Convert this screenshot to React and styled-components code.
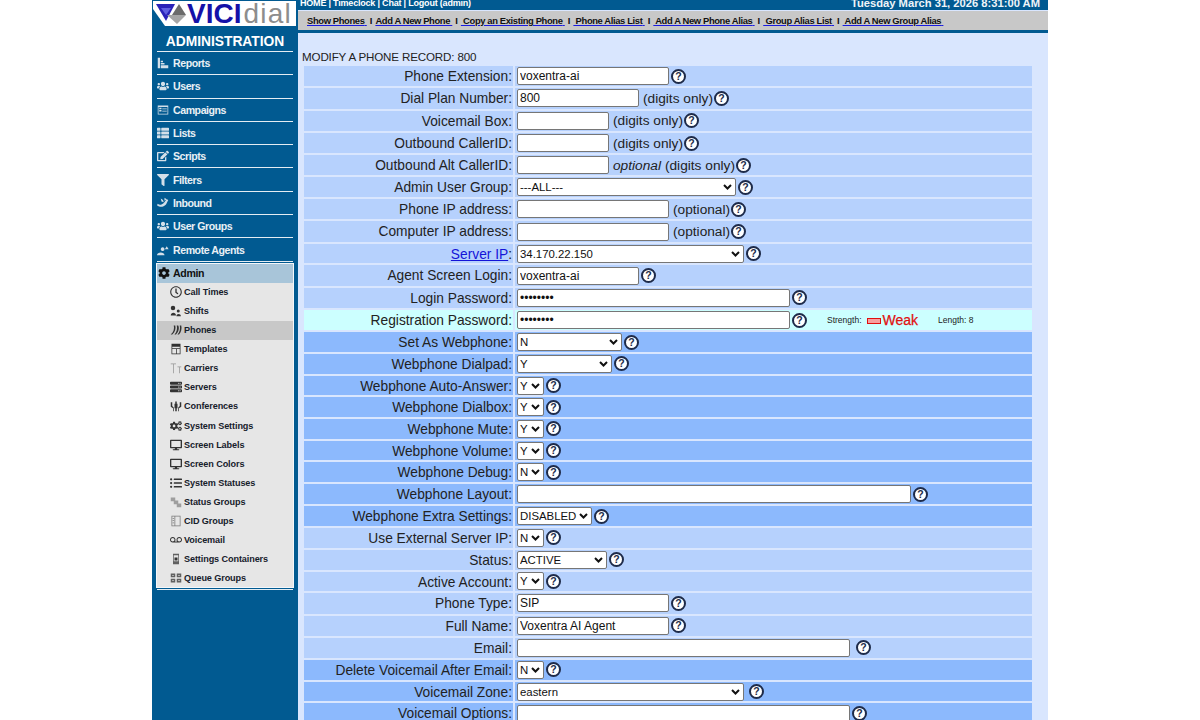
import React from "react";
import styled, { createGlobalStyle } from "styled-components";
import {
  FaUsers, FaFilter, FaCog, FaRegClock, FaServer, FaCogs, FaDesktop, FaEdit, FaListUl, FaThList,
} from "react-icons/fa";
import { MdVoicemail } from "react-icons/md";

const Global = createGlobalStyle`
  html, body { margin: 0; padding: 0; background: #fff; overflow: hidden; }
  body { font-family: "Liberation Sans", Arial, sans-serif; }
`;

const Page = styled.div`
  width: 896px;
  height: 720px;
  margin: 0 auto;
  display: flex;
  overflow: hidden;
`;

const Sidebar = styled.div`
  width: 146px;
  flex: none;
  background: #015a91;
  display: flex;
  flex-direction: column;
`;

const Logo = styled.div`
  height: 25px;
  margin: 1px 2px 0 1px;
  background: #fff;
  clip-path: polygon(0 0, 100% 0, 100% 100%, 12px 100%, 0 8px);
  display: flex;
  align-items: center;
  overflow: hidden;
  font-size: 28px;
  line-height: 25px;
`;

const LogoVici = styled.span`
  font-weight: bold;
  color: #1511a8;
  margin-left: -1px;
`;

const LogoDial = styled.span`
  color: #8d8d8d;
  margin-left: 2px;
  letter-spacing: 1.2px;
`;

const Title = styled.div`
  color: #fff;
  font-size: 13.8px;
  font-weight: bold;
  text-align: center;
  line-height: 17px;
  margin: 7px 5px 0;
  padding-bottom: 1px;
  border-bottom: 1px solid #e4edf3;
`;

const MainItem = styled.div`
  height: 22.3px;
  margin: 0 5px;
  border-bottom: 1px solid #e4edf3;
  display: flex;
  align-items: center;
  gap: 4px;
  color: #e9f0f5;
  font-size: 10.6px;
  font-weight: bold;
  letter-spacing: -0.45px;
  svg { flex: none; width: 12px; height: 12px; color: #d3dfe9; }
`;

const AdminPanel = styled.div`
  margin: 1px 4px 0;
  background: #e6e6e6;
  border: 1px solid #f4f7fa;
`;

const AdminHead = styled.div`
  height: 19px;
  background: #a8c5d9;
  display: flex;
  align-items: center;
  gap: 3px;
  padding-left: 1px;
  color: #111;
  font-size: 10.6px;
  font-weight: bold;
  letter-spacing: -0.35px;
  svg { width: 12px; height: 12px; color: #111; }
`;

const SubItem = styled.div`
  height: 19.05px;
  display: flex;
  align-items: center;
  gap: 2px;
  padding-left: 13px;
  background: ${(p) => (p.$active ? "#c8c8c8" : "transparent")};
  color: #16202b;
  font-size: 9.1px;
  font-weight: bold;
  letter-spacing: -0.1px;
  svg { flex: none; width: 12px; height: 12px; color: #333; }
`;

const PanelEnd = styled.div`
  height: 1px;
  margin: 1px 5px 0;
  background: #e4edf3;
`;

const Main = styled.div`
  flex: 1;
  min-width: 0;
  background: #d9e6fe;
  display: flex;
  flex-direction: column;
`;

const TopBar = styled.div`
  height: 10px;
  flex: none;
  background: #015a91;
  display: flex;
  justify-content: space-between;
  padding: 0 8px 0 2px;
  color: #fff;
  font-size: 9px;
  font-weight: bold;
  line-height: 7px;
  letter-spacing: -0.2px;
  overflow: hidden;
`;

const DateText = styled.span`
  font-size: 11.2px;
  letter-spacing: 0;
  color: #eef4f8;
`;

const NavBar = styled.div`
  height: 19px;
  flex: none;
  margin-top: 1px;
  background: #c8c8c8;
  border-bottom: 3px solid #015a91;
  display: flex;
  align-items: center;
  padding-left: 9px;
  font-size: 9.4px;
  font-weight: bold;
  color: #111;
  white-space: pre;
`;

const NavLink = styled.a`
  color: #111;
  text-decoration: underline;
  text-decoration-color: #1a1ae0;
  letter-spacing: -0.36px;
`;

const NavSep = styled.span`
  margin: 0 3px;
`;

const Heading = styled.div`
  flex: none;
  margin: 16px 0 0 4px;
  height: 17px;
  font-size: 11.6px;
  line-height: 15px;
  color: #222;
  letter-spacing: -0.15px;
`;

const Form = styled.div`
  flex: none;
  width: 728px;
  margin-left: 6px;
  display: flex;
  flex-direction: column;
  gap: 2px;
`;

const Row = styled.div`
  display: grid;
  grid-template-columns: 209px 1fr;
  grid-template-rows: 100%;
  column-gap: 2px;
  height: ${(p) => (p.$tall ? "20.3px" : "19.7px")};
`;

const rowColors = { light: "#b6d1fd", dark: "#8cb9fd", cyan: "#ccffff" };

const Label = styled.div`
  background: ${(p) => rowColors[p.$tone]};
  text-align: right;
  padding-right: 1px;
  font-size: 13.75px;
  line-height: 21.5px;
  color: #222;
  white-space: nowrap;
  a { color: #1414d8; text-decoration: underline; }
`;

const Value = styled.div`
  background: ${(p) => rowColors[p.$tone]};
  display: flex;
  align-items: center;
  padding-left: 2px;
  font-size: 13.7px;
  color: #222;
  white-space: pre;
`;

const TextInput = styled.input`
  box-sizing: border-box;
  height: 18px;
  padding: 1px 2px;
  margin: 0;
  background: #fff;
  border: 1px solid #767676;
  border-radius: 2px;
  font-family: "Liberation Sans", Arial, sans-serif;
  font-size: 12px;
  color: #111;
  outline: none;
`;

const Select = styled.select`
  box-sizing: border-box;
  height: 18px;
  padding: 0 0 0 2px;
  margin: 0;
  appearance: none;
  background-color: #fff;
  background-image: url("data:image/svg+xml,%3Csvg xmlns='http://www.w3.org/2000/svg' width='9' height='6'%3E%3Cpath d='M1 1l3.500 3.500L8 1' fill='none' stroke='%23111' stroke-width='2'/%3E%3C/svg%3E");
  background-repeat: no-repeat;
  background-position: right 3px center;
  border: 1px solid #767676;
  border-radius: 2px;
  font-family: "Liberation Sans", Arial, sans-serif;
  font-size: 11.4px;
  color: #111;
`;

const Help = styled.span`
  box-sizing: border-box;
  width: 15px;
  height: 15px;
  flex: none;
  margin-left: ${(p) => p.$gap}px;
  border: 2px solid #1e2b4a;
  border-radius: 50%;
  background: #fff;
  color: #1e2b4a;
  font-size: 10.5px;
  font-weight: bold;
  line-height: 11px;
  text-align: center;
`;

const Note = styled.span`
  margin-left: 4px;
`;

const Optional = styled.i`
  font-style: italic;
`;

const Strength = styled.div`
  margin-left: 20px;
  display: flex;
  align-items: center;
  font-size: 8.5px;
  color: #222;
`;

const WeakBar = styled.span`
  box-sizing: border-box;
  width: 14px;
  height: 6px;
  margin: 1px 2px 0 5px;
  background: #f7a0a0;
  border: 1px solid #e01010;
`;

const Weak = styled.span`
  font-size: 14px;
  color: #e01010;
  -webkit-text-stroke: 0.25px #e01010;
  margin-right: 20px;
`;

const Svg = ({ children }) => (
  <svg viewBox="0 0 16 16" fill="currentColor">{children}</svg>
);

const ReportsIcon = () => (
  <Svg><path d="M1 1h3v14H1zM5 5h3v2H5zM5 8h5v2H5zM5 11h10v4H5z" /></Svg>
);
const BoxListIcon = () => (
  <Svg>
    <path d="M1 2h14v12H1zm1 2v9h12V4z" fillRule="evenodd" />
    <path d="M3 5h3v2H3zM3 8h3v2H3zM7 6h6v1H7zM7 9h6v1H7z" />
  </Svg>
);
const InboundIcon = () => (
  <Svg><path d="M1 9c2 2 5 2 8-1l4-5 2 1-3 6c-4 4-8 4-12 1zM5 2l3 2 1 3-3-1zM10 1l3 2-3 2z" /></Svg>
);
const RemoteIcon = () => (
  <Svg><path d="M5 7a2.500 2.500 0 1 0 0-.1zM0 15c0-5 10-5 10 0zM13 3l2.500 4h-5z" /></Svg>
);
const ShiftsIcon = () => (
  <Svg><path d="M4 1a3 3 0 1 1 0 6 3 3 0 0 1 0-6zM1 14c0-5 7-5 7 0zM11 6a2 2 0 1 1 0 4 2 2 0 0 1 0-4zM8.500 15c0-4 6-4 6 0z" /></Svg>
);
const PhonesIcon = () => (
  <Svg>
    <path d="M5 2c1 4 0 9-4 12h2c4-3 5-8 4-12zM9 2c1 4 0 9-3 12h2c3-3 5-8 3-12zM13 2c1 4 0 9-3 12h2c3-3 4-8 3-12z" />
  </Svg>
);
const TemplatesIcon = () => (
  <Svg><path d="M2 1h12v14H2zm1 4v2h10V5zm0 3v6h5V8zm6 0v6h4V8z" fillRule="evenodd" /></Svg>
);
const CarriersIcon = () => (
  <Svg><path opacity=".45" d="M1 2h7v1H5v12H4V3H1zM10 6h5v1h-2v8h-1V7h-2z" /></Svg>
);
const ConferenceIcon = () => (
  <Svg><path d="M1 3h2v5l2 2v5H4v-4L1 9zM13 3h2v6l-3 2v4h-1v-5l2-2zM7 2h2v3h1v6H9v4H7v-4H6V5h1z" /></Svg>
);
const StatusGroupIcon = () => (
  <Svg><path opacity=".4" d="M1 2h6v5H1zM5 6h6v5H5zM9 10h6v5H9z" /></Svg>
);
const CidIcon = () => (
  <Svg><path opacity=".6" d="M2 1h12v14H2zm1 1v12h3V2zm4 0v12h6V2z" fillRule="evenodd" /><path opacity=".6" d="M3.500 4h2v1h-2zM3.500 7h2v1h-2zM3.500 10h2v1h-2z" /></Svg>
);
const ContainerIcon = () => (
  <Svg><path d="M4 1h8v14H4zm1 2v8h6V3z" fillRule="evenodd" opacity=".75" /><path d="M6 6h4v4H6z" /></Svg>
);
const QueueIcon = () => (
  <Svg><path opacity=".75" d="M1 2h6v5H1zM9 2h6v5H9zM1 9h6v5H1zM9 9h6v5H9z" /><path fill="#e6e6e6" d="M3 4h2v1H3zM11 4h2v1h-2zM3 11h2v1H3zM11 11h2v1h-2z" /></Svg>
);

const mainItems = [
  ["Reports", <ReportsIcon />],
  ["Users", <FaUsers />],
  ["Campaigns", <BoxListIcon />],
  ["Lists", <FaThList />],
  ["Scripts", <FaEdit />],
  ["Filters", <FaFilter />],
  ["Inbound", <InboundIcon />],
  ["User Groups", <FaUsers />],
  ["Remote Agents", <RemoteIcon />],
];

const subItems = [
  ["Call Times", <FaRegClock />],
  ["Shifts", <ShiftsIcon />],
  ["Phones", <PhonesIcon />],
  ["Templates", <TemplatesIcon />],
  ["Carriers", <CarriersIcon />],
  ["Servers", <FaServer />],
  ["Conferences", <ConferenceIcon />],
  ["System Settings", <FaCogs />],
  ["Screen Labels", <FaDesktop />],
  ["Screen Colors", <FaDesktop />],
  ["System Statuses", <FaListUl />],
  ["Status Groups", <StatusGroupIcon />],
  ["CID Groups", <CidIcon />],
  ["Voicemail", <MdVoicemail />],
  ["Settings Containers", <ContainerIcon />],
  ["Queue Groups", <QueueIcon />],
];

const navLinks = [
  "Show Phones", "Add A New Phone", " Copy an Existing Phone", " Phone Alias List",
  " Add A New Phone Alias", " Group Alias List", " Add A New Group Alias",
];

const digits = "(digits only)";

const rows = [
  { label: "Phone Extension", tone: "light", input: 152, value: "voxentra-ai" },
  { label: "Dial Plan Number", tone: "light", input: 122, value: "800", note: digits },
  { label: "Voicemail Box", tone: "light", input: 92, note: digits },
  { label: "Outbound CallerID", tone: "light", input: 92, note: digits },
  { label: "Outbound Alt CallerID", tone: "light", input: 92, optional: true, note: digits },
  { label: "Admin User Group", tone: "light", select: 219, value: "---ALL---" },
  { label: "Phone IP address", tone: "light", input: 152, note: "(optional)" },
  { label: "Computer IP address", tone: "light", input: 152, note: "(optional)" },
  { label: "Server IP", tone: "light", select: 227, value: "34.170.22.150", link: true },
  { label: "Agent Screen Login", tone: "light", input: 122, value: "voxentra-ai" },
  { label: "Login Password", tone: "light", input: 273, value: "password", password: true },
  { label: "Registration Password", tone: "cyan", input: 273, value: "password", password: true, strength: true },
  { label: "Set As Webphone", tone: "dark", select: 105, value: "N" },
  { label: "Webphone Dialpad", tone: "dark", select: 95, value: "Y" },
  { label: "Webphone Auto-Answer", tone: "dark", select: 27, value: "Y" },
  { label: "Webphone Dialbox", tone: "dark", select: 27, value: "Y" },
  { label: "Webphone Mute", tone: "dark", select: 27, value: "Y" },
  { label: "Webphone Volume", tone: "dark", select: 27, value: "Y" },
  { label: "Webphone Debug", tone: "dark", select: 27, value: "N" },
  { label: "Webphone Layout", tone: "dark", input: 394 },
  { label: "Webphone Extra Settings", tone: "dark", select: 75, value: "DISABLED" },
  { label: "Use External Server IP", tone: "light", select: 27, value: "N" },
  { label: "Status", tone: "light", select: 90, value: "ACTIVE" },
  { label: "Active Account", tone: "light", select: 27, value: "Y" },
  { label: "Phone Type", tone: "light", input: 152, value: "SIP" },
  { label: "Full Name", tone: "light", input: 152, value: "Voxentra AI Agent" },
  { label: "Email", tone: "light", input: 333, helpGap: 6 },
  { label: "Delete Voicemail After Email", tone: "dark", select: 27, value: "N" },
  { label: "Voicemail Zone", tone: "dark", select: 227, value: "eastern", helpGap: 5 },
  { label: "Voicemail Options", tone: "dark", input: 333 },
];

const FormRow = ({ row }) => (
  <Row $tall={!!row.input}>
    <Label $tone={row.tone}>
      {row.link ? <a href="#server">{row.label}</a> : row.label}:
    </Label>
    <Value $tone={row.tone}>
      {row.input ? (
        <TextInput
          readOnly
          type={row.password ? "password" : "text"}
          value={row.value || ""}
          style={{ width: row.input }}
        />
      ) : (
        <Select value={row.value} onChange={() => {}} style={{ width: row.select }}>
          <option>{row.value}</option>
        </Select>
      )}
      {row.optional && <Note><Optional>optional</Optional></Note>}
      {row.note && <Note>{row.note}</Note>}
      <Help $gap={row.helpGap ?? (row.note ? 1 : 2)}>?</Help>
      {row.strength && (
        <Strength>
          Strength:<WeakBar /><Weak>Weak</Weak>Length: 8
        </Strength>
      )}
    </Value>
  </Row>
);

export default function App() {
  return (
    <Page>
      <Global />
      <Sidebar>
        <Logo>
          <svg width="35" height="25" viewBox="0 0 35 25">
            <path fill="#2a22b8" d="M3 3h19l-9 17z" />
            <path fill="#5f5fe0" d="M8 7h10l-5 7z" />
            <path fill="#6b6b6b" d="M26 3l7 11H19z" />
            <path fill="#a5a5a5" d="M14 14h19l-9 9z" />
          </svg>
          <LogoVici>VICI</LogoVici>
          <LogoDial>dial</LogoDial>
        </Logo>
        <Title>ADMINISTRATION</Title>
        {mainItems.map(([name, icon]) => (
          <MainItem key={name}>{icon}{name}</MainItem>
        ))}
        <AdminPanel>
          <AdminHead><FaCog />Admin</AdminHead>
          {subItems.map(([name, icon]) => (
            <SubItem key={name} $active={name === "Phones"}>{icon}{name}</SubItem>
          ))}
        </AdminPanel>
        <PanelEnd />
      </Sidebar>
      <Main>
        <TopBar>
          <span>HOME | Timeclock | Chat | Logout (admin)</span>
          <DateText>Tuesday March 31, 2026 8:31:00 AM</DateText>
        </TopBar>
        <NavBar>
          {navLinks.map((name, i) => (
            <React.Fragment key={name}>
              {i > 0 && <NavSep>I</NavSep>}
              <NavLink href="#nav">{name} </NavLink>
            </React.Fragment>
          ))}
        </NavBar>
        <Heading>MODIFY A PHONE RECORD: 800</Heading>
        <Form>
          {rows.map((row) => <FormRow key={row.label} row={row} />)}
        </Form>
      </Main>
    </Page>
  );
}
